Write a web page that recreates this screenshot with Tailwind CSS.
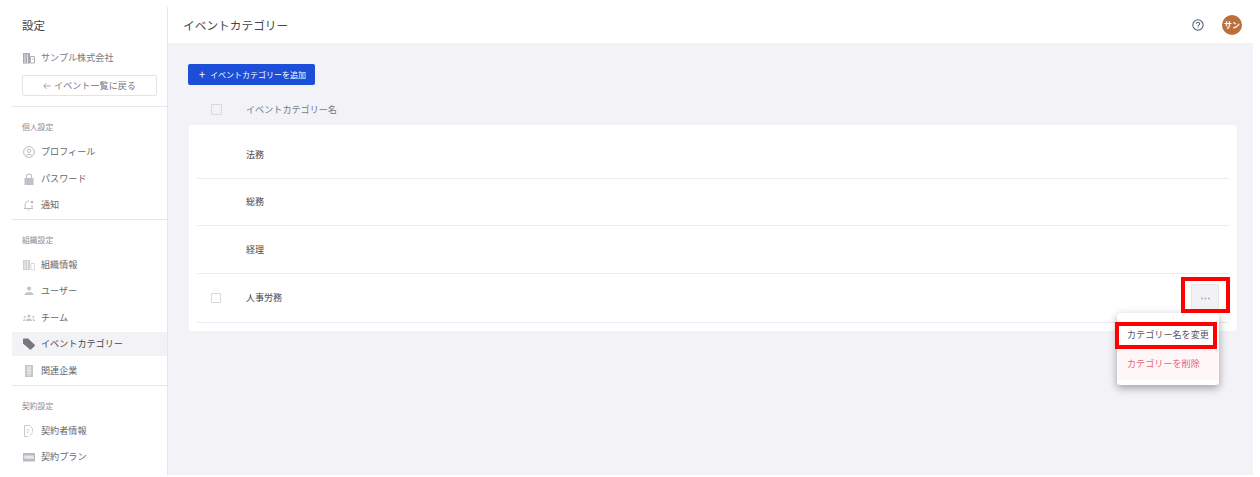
<!DOCTYPE html>
<html lang="ja">
<head>
  <meta charset="UTF-8" />
  <title>イベントカテゴリー</title>
  <script src="https://cdn.jsdelivr.net/npm/@tailwindcss/browser@4"></script>
</head>
<body class="bg-white font-['Noto_Sans_CJK_JP','Noto_Sans',sans-serif] overflow-hidden">
  <div class="relative flex h-[475px] w-[1253px]">

    <!-- Sidebar -->
    <aside class="w-[168px] shrink-0 pl-3 pt-[7px] h-full">
      <div class="h-full border-r border-[#e6e6ea]">
        <div class="pl-[10px] pt-[10px] h-[36px] text-[11.5px] leading-[16px] text-[#45454d]">設定</div>
        <div class="pl-[11px] mt-[1px] flex items-center gap-[6px] h-[28px] text-[9.1px] text-[#77777f]">
          <svg class="w-3 h-3" viewBox="0 0 12 12" fill="#a8a8b0"><path d="M0 1h7v10.500H0z"/><path d="M2 2v9M4.500 2v9" stroke="#fff" stroke-width=".7"/><path d="M7.500 4.500h4v6.500h-4z" fill="none" stroke="#a8a8b0" stroke-width=".9"/><path d="M9 7h1.500" stroke="#a8a8b0" stroke-width=".8"/></svg>
          <span>サンプル株式会社</span>
        </div>
        <div class="ml-[10px] mt-[3px] w-[135px] h-[21px] border border-[#e4e4e8] rounded-[2px] flex items-center justify-center gap-[3px] text-[9.1px] text-[#77777f]">
          <svg class="w-2 h-2" viewBox="0 0 8 8" fill="none" stroke="#8e8e96" stroke-width=".8"><path d="M7.500 4H.8M3.500 1.200.8 4l2.700 2.800"/></svg>
          <span>イベント一覧に戻る</span>
        </div>
        <div class="mt-[10px] border-t border-[#e8e8ec]"></div>

        <div class="pl-[10px] mt-[13px] h-[14px] text-[7.8px] leading-[14px] text-[#8e8e96]">個人設定</div>
        <div class="mt-[5px]">
          <a class="h-[26.5px] pl-[11px] flex items-center gap-[6px] text-[9.1px] text-[#66666e]">
            <svg class="w-3 h-3" viewBox="0 0 12 12" fill="none" stroke="#b4b4bc" stroke-width=".9"><circle cx="6" cy="6" r="5.400"/><circle cx="6" cy="4.800" r="1.700"/><path d="M3 9.400c1-1.500 5-1.500 6 0"/></svg>
            <span>プロフィール</span>
          </a>
          <a class="h-[26.5px] pl-[11px] flex items-center gap-[6px] text-[9.1px] text-[#66666e]">
            <svg class="w-3 h-3" viewBox="0 0 12 12" fill="#c0c0c8"><path d="M1.500 5h9v7h-9z"/><path d="M3.500 5V3.500a2.500 2.500 0 0 1 5 0V5" fill="none" stroke="#c0c0c8" stroke-width="1.100"/></svg>
            <span>パスワード</span>
          </a>
          <a class="h-[26.5px] pl-[11px] flex items-center gap-[6px] text-[9.1px] text-[#66666e]">
            <svg class="w-3 h-3" viewBox="0 0 12 12" fill="none" stroke="#b4b4bc" stroke-width=".9"><path d="M1 9.500h9M2.200 9.500V5.500C2.200 3.500 3.600 2 6 2M9 6v3.500M4.800 11h1.600"/><circle cx="9" cy="3" r="1.300" fill="#b4b4bc" stroke="none"/></svg>
            <span>通知</span>
          </a>
        </div>
        <div class="border-t border-[#e8e8ec]"></div>

        <div class="pl-[10px] mt-[13px] h-[14px] text-[7.8px] leading-[14px] text-[#8e8e96]">組織設定</div>
        <div class="mt-[5px]">
          <a class="h-[26.5px] pl-[11px] flex items-center gap-[6px] text-[9.1px] text-[#66666e]">
            <svg class="w-3 h-3" viewBox="0 0 12 12" fill="#cfcfd6"><path d="M0 1h7v10H0z"/><path d="M2 2v8M4.500 2v8" stroke="#fff" stroke-width=".7"/><path d="M8 4.500h3.500V11H8z" fill="none" stroke="#cfcfd6" stroke-width=".8"/></svg>
            <span>組織情報</span>
          </a>
          <a class="h-[26.5px] pl-[11px] flex items-center gap-[6px] text-[9.1px] text-[#66666e]">
            <svg class="w-3 h-3" viewBox="0 0 12 12" fill="#c4c4cc"><circle cx="6" cy="3.600" r="2.100"/><path d="M1.500 10c0-2.300 2.200-3 4.500-3s4.500.7 4.500 3z"/></svg>
            <span>ユーザー</span>
          </a>
          <a class="h-[26.5px] pl-[11px] flex items-center gap-[6px] text-[9.1px] text-[#66666e]">
            <svg class="w-3 h-3" viewBox="0 0 12 12" fill="#c4c4cc"><circle cx="6" cy="4" r="1.600"/><path d="M3 9c0-1.800 1.400-2.500 3-2.500S9 7.200 9 9z"/><circle cx="1.800" cy="5" r="1"/><circle cx="10.200" cy="5" r="1"/><path d="M0 9c0-1.200.8-2 1.800-2l.6.100L2 9zM12 9c0-1.200-.8-2-1.800-2l-.6.100L10 9z"/></svg>
            <span>チーム</span>
          </a>
          <a class="h-[24px] my-[1px] pl-[11px] flex items-center gap-[6px] text-[9.1px] text-[#45454d] bg-[#f2f2f7]">
            <svg class="w-3 h-3" viewBox="0 0 12 12" fill="#77777f"><path d="M0 1.500A1 1 0 0 1 1 .5h4.200l6.500 6.300a.8.800 0 0 1 0 1.100L8 11.500a.8.800 0 0 1-1.100 0L0 5.500z"/></svg>
            <span>イベントカテゴリー</span>
          </a>
          <a class="h-[27.5px] pl-[11px] pt-[1px] flex items-center gap-[6px] text-[9.1px] text-[#66666e]">
            <svg class="w-3 h-3" viewBox="0 0 12 12" fill="#c4c4cc"><path d="M2 0h8v12H2z"/><path d="M3.500 3h5M3.500 5.500h5M3.500 8h5M5 1v10M7 1v10" stroke="#fff" stroke-width=".6"/></svg>
            <span>関連企業</span>
          </a>
        </div>
        <div class="border-t border-[#e8e8ec]"></div>

        <div class="pl-[10px] mt-[13px] h-[14px] text-[7.8px] leading-[14px] text-[#8e8e96]">契約設定</div>
        <div class="mt-[5px]">
          <a class="h-[26.5px] pl-[11px] flex items-center gap-[6px] text-[9.1px] text-[#66666e]">
            <svg class="w-3 h-3" viewBox="0 0 12 12" fill="none" stroke="#c4c4cc" stroke-width=".9"><path d="M5 11.500H1.500V.5h5L9.500 3.500v3M3.500 5h3M3.500 7.200h2M6.500 10.800l3.500-3"/></svg>
            <span>契約者情報</span>
          </a>
          <a class="h-[26.5px] pl-[11px] flex items-center gap-[6px] text-[9.1px] text-[#66666e]">
            <svg class="w-3 h-3" viewBox="0 0 12 12" fill="#b9b9c1"><path d="M0 2h12v8.500H0z"/><path d="M1.300 4.500h9.400v3.300H1.300z" fill="#e8e8ec"/></svg>
            <span>契約プラン</span>
          </a>
        </div>
      </div>
    </aside>

    <!-- Main -->
    <main class="flex-1 flex flex-col">
      <div class="h-[7px]"></div>
      <header class="h-[36px] shrink-0 bg-white flex items-center justify-between pl-[15px] pr-[11px]">
        <h1 class="text-[11.7px] text-[#45454d]">イベントカテゴリー</h1>
        <div class="flex items-center gap-[18px]">
          <svg class="w-3 h-3" viewBox="0 0 13 13" fill="none" stroke="#4a5a70" stroke-width="1.100"><circle cx="6.500" cy="6.500" r="5.600"/><path d="M4.800 5.200a1.700 1.700 0 1 1 2.600 1.400c-.6.400-.9.700-.9 1.400"/><path d="M6.500 9.200v.9"/></svg>
          <div class="w-5 h-5 rounded-full bg-[#bb6f3c] flex items-center justify-center text-[8px] font-bold text-white">サン</div>
        </div>
      </header>
      <section class="flex-1 bg-[#f2f2f7] pl-[21px] pr-4">
        <button class="-ml-[1px] mt-[21px] h-[21px] w-[127px] pl-[11px] bg-[#1d4ed8] rounded-[2px] text-white text-[8px] flex items-center gap-[5px]">
          <span class="text-[11px] leading-none">+</span><span>イベントカテゴリーを追加</span>
        </button>
        <div class="h-[40px] pt-[9px] flex items-center pl-[22px] text-[9.1px] text-[#77777f]">
          <span class="w-[11px] h-[11px] border border-[#d8d8de] rounded-[1px] mr-[24px]"></span>
          <span>イベントカテゴリー名</span>
        </div>
        <div class="h-[206px] bg-white rounded-[3px] px-2">
          <div class="h-[54px] pt-[6px] border-b border-[#ececf0] flex items-center pl-[49px] text-[9px] text-[#45454d]">法務</div>
          <div class="h-[47px] border-b border-[#ececf0] flex items-center pl-[49px] text-[9px] text-[#45454d]">総務</div>
          <div class="h-[48px] border-b border-[#ececf0] flex items-center pl-[49px] text-[9px] text-[#45454d]">経理</div>
          <div class="h-[49px] border-b border-[#ececf0] flex items-center pl-[14px] pr-[10px] text-[9px] text-[#45454d]">
            <span class="w-[10px] h-[10px] border border-[#d8d8de] rounded-[1px] mr-[25px]"></span>
            <span>人事労務</span>
            <span class="ml-auto w-[28px] h-[28px] bg-[#f2f2f5] border border-[#e6e6ea] rounded-[2px] flex items-center justify-center">
              <svg class="w-[9px] h-[3px]" viewBox="0 0 9 3" fill="#b0b0b8"><circle cx="1" cy="1.500" r="1"/><circle cx="4.500" cy="1.500" r="1"/><circle cx="8" cy="1.500" r="1"/></svg>
            </span>
          </div>
        </div>
      </section>
    </main>

    <!-- Dropdown -->
    <div class="absolute left-[1117px] top-[313px] w-[102px] h-[72px] bg-white rounded-[3px] shadow-[0_3px_8px_rgba(0,0,0,0.35)] pt-[9px] text-[9.1px]">
      <div class="h-[26px] pl-[10px] flex items-center text-[#55555d]">カテゴリー名を変更</div>
      <div class="h-[32px] pl-[10px] flex items-center text-[#e4647c] bg-[#fff6f7]">カテゴリーを削除</div>
    </div>

    <!-- Red highlight boxes -->
    <div class="absolute left-[1181px] top-[277px] w-[49px] h-[36px] border-[4px] border-[#ff0000]"></div>
    <div class="absolute left-[1115px] top-[322px] w-[102px] h-[27px] border-[4px] border-[#ff0000]"></div>
  </div>
</body>
</html>
